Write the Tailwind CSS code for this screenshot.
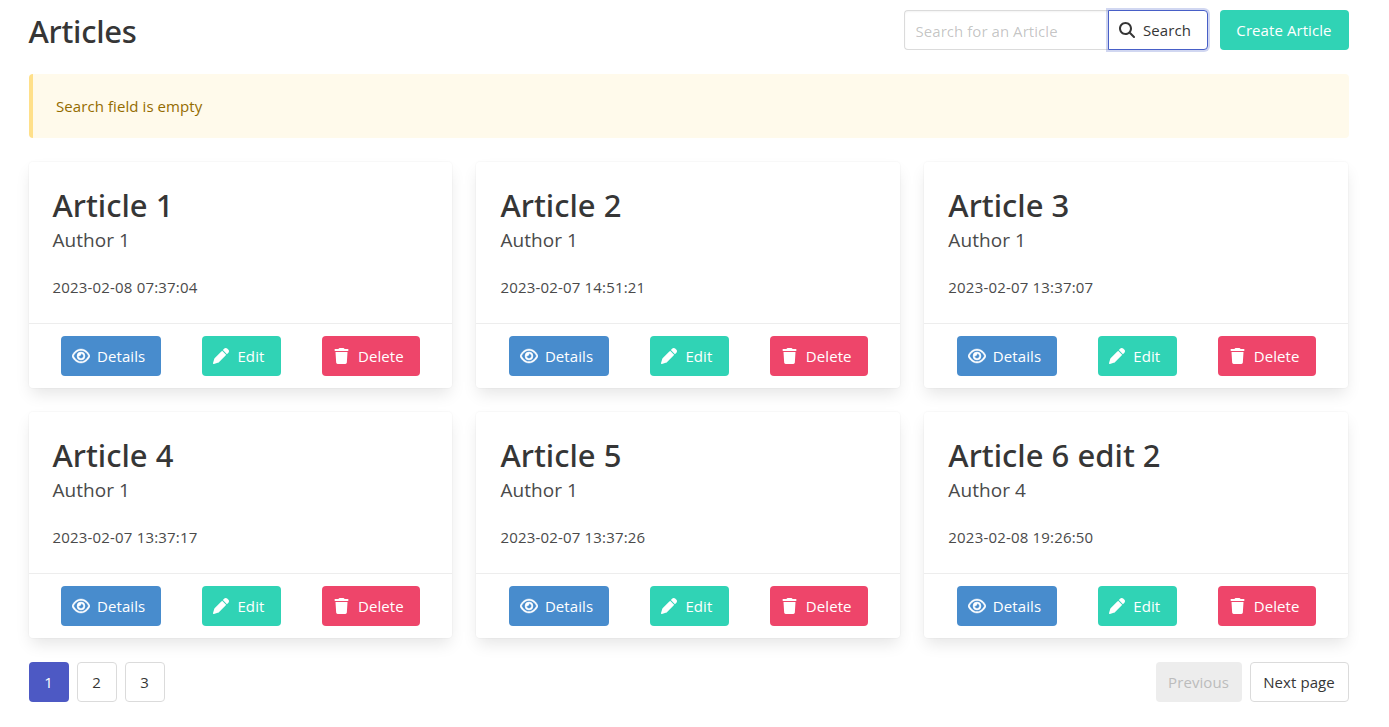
<!DOCTYPE html>
<html lang="en">
<head>
<meta charset="utf-8">
<title>Articles</title>
<script src="https://cdn.jsdelivr.net/npm/@tailwindcss/browser@4"></script>
</head>
<body class="bg-white font-['Open_Sans','Noto_Sans',sans-serif] text-[15px] leading-6 text-[#4a4a4a] overflow-hidden">
<svg class="hidden">
  <symbol id="search" viewBox="0 0 512 512"><path d="M416 208c0 45.900-14.900 88.300-40 122.700L502.600 457.400c12.500 12.500 12.500 32.800 0 45.300s-32.800 12.500-45.300 0L330.700 376c-34.400 25.200-76.800 40-122.700 40C93.100 416 0 322.900 0 208S93.100 0 208 0S416 93.100 416 208zM208 352a144 144 0 1 0 0-288 144 144 0 1 0 0 288z"/></symbol>
  <symbol id="eye" viewBox="0 0 576 512"><path stroke="currentColor" stroke-width="14" d="M288 80c-65.200 0-118.800 29.600-159.900 67.700C89.600 183.500 63 226 49.400 256c13.600 30 40.200 72.500 78.600 108.300C169.200 402.400 222.800 432 288 432s118.800-29.600 159.900-67.700C486.400 328.500 513 286 526.600 256c-13.600-30-40.200-72.500-78.600-108.300C406.800 109.600 353.200 80 288 80zM95.400 112.600C142.500 68.800 207.200 32 288 32s145.500 36.800 192.600 80.600c46.800 43.500 78.100 95.400 93 131.100c3.300 7.900 3.300 16.700 0 24.600c-14.900 35.700-46.200 87.700-93 131.100C433.500 443.200 368.800 480 288 480s-145.500-36.800-192.600-80.600C48.600 356 17.300 304 2.500 268.300c-3.300-7.900-3.300-16.700 0-24.600C17.300 208 48.600 156 95.400 112.600zM288 336c44.200 0 80-35.800 80-80s-35.800-80-80-80c-.7 0-1.300 0-2 0c1.300 5.100 2 10.500 2 16c0 35.300-28.700 64-64 64c-5.500 0-10.900-.7-16-2c0 .7 0 1.300 0 2c0 44.200 35.800 80 80 80zm0-208a128 128 0 1 1 0 256 128 128 0 1 1 0-256z"/></symbol>
  <symbol id="pencil" viewBox="0 0 512 512"><path d="M410.300 231l11.300-11.300-33.900-33.900-62.100-62.100L291.700 89.800l-11.300 11.300-22.600 22.600L58.600 322.900c-10.400 10.400-18 23.300-22.200 37.400L1 480.700c-2.500 8.400-.2 17.500 6.100 23.700s15.300 8.500 23.700 6.100l120.300-35.400c14.100-4.200 27-11.800 37.400-22.200L387.700 253.700 410.300 231zM362.700 18.700L314.300 67.100 444.900 197.700l48.400-48.400c25-25 25-65.500 0-90.500L453.300 18.700c-25-25-65.500-25-90.500 0z"/></symbol>
  <symbol id="trash" viewBox="0 0 448 512"><path d="M135.200 17.700L128 32H32C14.300 32 0 46.300 0 64S14.300 96 32 96H416c17.700 0 32-14.300 32-32s-14.300-32-32-32H320l-7.200-14.300C307.400 6.800 296.300 0 284.200 0H163.800c-12.100 0-23.200 6.800-28.600 17.700zM416 128H32L53.200 467c1.600 25.300 22.600 45 47.900 45H346.900c25.300 0 46.300-19.700 47.900-45L416 128z"/></symbol>
</svg>
<main class="ml-[28.5px] w-[1320px] pt-[10px] tracking-[0.08px]">
  <header class="flex h-10 items-center justify-between">
    <h1 class="pt-px font-['Noto_Sans'] text-[31px] leading-9 font-medium text-[#363636] tracking-[-0.25px]">Articles</h1>
    <div class="flex gap-3">
      <form class="flex">
        <input placeholder="Search for an Article" class="h-10 w-[204px] rounded-l border border-r-0 border-[#dbdbdb] px-[11px] pt-0.5 tracking-[0.05px] shadow-[inset_0_1px_2px_rgba(10,10,10,0.05)] outline-none placeholder:text-[#363636]/30">
        <button type="button" class="relative flex h-10 w-[100px] items-center rounded-r border border-[#485fc7] bg-white pl-[6.5px] text-[#363636] shadow-[0_0_0_2px_rgba(72,95,199,0.25)]"><span class="mr-1 flex size-6 items-center justify-center"><svg class="size-4 fill-current"><use href="#search"/></svg></span>Search</button>
      </form>
      <button class="h-10 w-[129px] rounded bg-[#30d3b5] text-white">Create Article</button>
    </div>
  </header>
  <div class="mt-6 h-16 rounded border-l-4 border-[#ffe08a] bg-[#fffaeb] pt-5 pl-[23.5px] text-[#946c00]">Search field is empty</div>
  <section id="cards" class="mt-6 grid w-[1319.8px] grid-cols-3 gap-6"></section>
  <nav class="mt-6 flex justify-between text-[#363636]">
    <div class="flex gap-2">
      <a class="flex size-10 items-center justify-center rounded bg-[#4d59c4] text-white">1</a>
      <a class="flex size-10 items-center justify-center rounded border border-[#dbdbdb]">2</a>
      <a class="flex size-10 items-center justify-center rounded border border-[#dbdbdb]">3</a>
    </div>
    <div class="flex gap-2">
      <a class="flex h-10 w-[86px] items-center justify-center rounded bg-[#ededed] text-[#bcbcbc]">Previous</a>
      <a class="flex h-10 w-[99px] items-center justify-center rounded border border-[#dbdbdb]">Next page</a>
    </div>
  </nav>
</main>
<script>
const articles = [
  ["Article 1", "Author 1", "2023-02-08 07:37:04"],
  ["Article 2", "Author 1", "2023-02-07 14:51:21"],
  ["Article 3", "Author 1", "2023-02-07 13:37:07"],
  ["Article 4", "Author 1", "2023-02-07 13:37:17"],
  ["Article 5", "Author 1", "2023-02-07 13:37:26"],
  ["Article 6 edit 2", "Author 4", "2023-02-08 19:26:50"],
];
document.getElementById("cards").innerHTML = articles.map(([title, author, date]) => `
  <article class="h-[226px] rounded bg-white shadow-[0_8px_16px_-2px_rgba(10,10,10,0.1),0_0_0_1px_rgba(10,10,10,0.02)]">
    <div class="h-[161px] px-6 pt-[25px]">
      <h2 class="font-['Noto_Sans'] text-[31px] leading-9 font-medium text-[#363636] tracking-[0.02px]">${title}</h2>
      <p class="mt-1 text-[19px] leading-[26px] tracking-[0.05px]">${author}</p>
      <p class="mt-[22px] tracking-[0.18px]">${date}</p>
    </div>
    <footer class="flex h-[65px] justify-around border-t border-[#ededed] p-3 text-white">
      <button class="flex h-10 w-[100px] items-center rounded bg-[#488ccd] pl-2"><span class="mr-1 flex size-6 items-center justify-center"><svg class="h-4 w-[18px] overflow-visible fill-current"><use href="#eye"/></svg></span>Details</button>
      <button class="flex h-10 w-[79px] items-center rounded bg-[#30d3b5] pl-[7.5px]"><span class="mr-1 flex size-6 items-center justify-center"><svg class="size-4 fill-current"><use href="#pencil"/></svg></span>Edit</button>
      <button class="flex h-10 w-[98px] items-center rounded bg-[#ee456a] pl-2"><span class="mr-1 flex size-6 items-center justify-center"><svg class="h-4 w-[15px] fill-current"><use href="#trash"/></svg></span>Delete</button>
    </footer>
  </article>`).join("");
</script>
</body>
</html>
